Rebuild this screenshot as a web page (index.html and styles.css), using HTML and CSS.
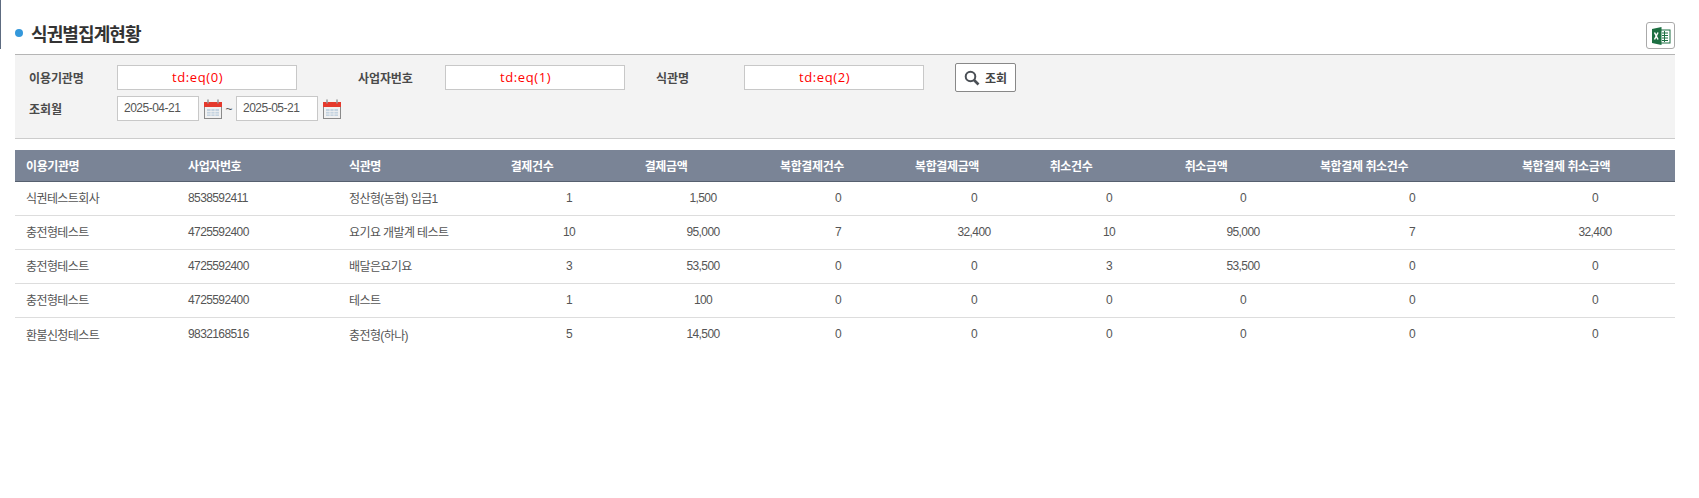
FILE: index.html
```html
<!DOCTYPE html>
<html lang="ko">
<head>
    <meta charset="UTF-8">
    <title>식권별집계현황</title>
    <link rel="stylesheet" href="styles.css">
</head>
<body>
<div class="page">
    <div class="edge"></div>
    <div class="content">
        <!-- 제목 -->
        <div class="title-bar">
            <h2 class="title"><span class="dot"></span>식권별집계현황</h2>
            <button type="button" class="btn-excel">
                <svg width="20" height="20" viewBox="0 0 20 20">
                    <rect x="8" y="4" width="11" height="13" fill="#fff" stroke="#1d6f42" stroke-width="1"/>
                    <path d="M11 7h6M11 9.500h6M11 12h6M11 14.500h6M13.500 5v11" stroke="#1d6f42" stroke-width="1" fill="none"/>
                    <path d="M1 3l9.500-2v18L1 17z" fill="#1d6f42"/>
                    <path d="M3.500 6.500l3.500 7M7 6.500l-3.500 7" stroke="#fff" stroke-width="1.500" fill="none"/>
                </svg>
            </button>
        </div>

        <!-- 검색 -->
        <div class="search">
            <div class="search-row">
                <label class="lbl lbl-a">이용기관명</label>
                <div class="field"><span class="eq">td:eq(0)</span></div>
                <label class="lbl lbl-b">사업자번호</label>
                <div class="field"><span class="eq">td:eq(1)</span></div>
                <label class="lbl lbl-c">식관명</label>
                <div class="field"><span class="eq">td:eq(2)</span></div>
                <button type="button" class="btn-search">
                    <svg width="16" height="16" viewBox="0 0 16 16">
                        <circle cx="6.500" cy="6.500" r="4.800" fill="none" stroke="#4a4f55" stroke-width="2"/>
                        <path d="M10 10l4.500 4.500" stroke="#4a4f55" stroke-width="2.600"/>
                    </svg>
                    조회
                </button>
            </div>
            <div class="search-row date-row">
                <label class="lbl lbl-a">조회월</label>
                <div class="date">2025-04-21</div>
                <svg class="cal" width="18" height="20" viewBox="0 0 18 20">
                    <rect x="0.500" y="3.500" width="17" height="16" fill="#f1f1f1" stroke="#8a8a8a"/>
                    <rect x="0" y="3" width="18" height="5" fill="#e5392c"/>
                    <path d="M4 0.500v4M14 0.500v4" stroke="#999" stroke-width="1.500"/>
                    <rect x="3" y="10" width="12" height="7" fill="#c4d3e0"/>
                    <path d="M3 12.500h12M3 15h12M7 10v7M11 10v7" stroke="#f1f1f1" stroke-width="0.800"/>
                </svg>
                <span class="tilde">~</span>
                <div class="date">2025-05-21</div>
                <svg class="cal" width="18" height="20" viewBox="0 0 18 20">
                    <rect x="0.500" y="3.500" width="17" height="16" fill="#f1f1f1" stroke="#8a8a8a"/>
                    <rect x="0" y="3" width="18" height="5" fill="#e5392c"/>
                    <path d="M4 0.500v4M14 0.500v4" stroke="#999" stroke-width="1.500"/>
                    <rect x="3" y="10" width="12" height="7" fill="#c4d3e0"/>
                    <path d="M3 12.500h12M3 15h12M7 10v7M11 10v7" stroke="#f1f1f1" stroke-width="0.800"/>
                </svg>
            </div>
        </div>

        <!-- 헤더 테이블 -->
        <table class="grid grid-head">
            <colgroup>
                <col class="h1"><col class="h2"><col class="h3"><col class="h4"><col class="h5"><col class="h6">
                <col class="h7"><col class="h8"><col class="h9"><col class="h10"><col class="h11">
            </colgroup>
            <tr>
                <th class="left">이용기관명</th>
                <th class="left">사업자번호</th>
                <th class="left">식관명</th>
                <th>결제건수</th>
                <th>결제금액</th>
                <th>복합결제건수</th>
                <th>복합결제금액</th>
                <th>취소건수</th>
                <th>취소금액</th>
                <th>복합결제 취소건수</th>
                <th class="last">복합결제 취소금액</th>
            </tr>
        </table>

        <!-- 데이터 테이블 -->
        <table class="grid grid-body">
            <colgroup>
                <col class="b1"><col class="b2"><col class="b3"><col class="b4"><col class="b5"><col class="b6">
                <col class="b7"><col class="b8"><col class="b9"><col class="b10"><col class="b11">
            </colgroup>
            <tr>
                <td class="left">식권테스트회사</td><td class="left">8538592411</td><td class="left">정산형(농협) 입금1</td>
                <td>1</td><td>1,500</td><td>0</td><td>0</td><td>0</td><td>0</td><td>0</td><td>0</td>
            </tr>
            <tr>
                <td class="left">충전형테스트</td><td class="left">4725592400</td><td class="left">요기요 개발계 테스트</td>
                <td>10</td><td>95,000</td><td>7</td><td>32,400</td><td>10</td><td>95,000</td><td>7</td><td>32,400</td>
            </tr>
            <tr>
                <td class="left">충전형테스트</td><td class="left">4725592400</td><td class="left">배달은요기요</td>
                <td>3</td><td>53,500</td><td>0</td><td>0</td><td>3</td><td>53,500</td><td>0</td><td>0</td>
            </tr>
            <tr>
                <td class="left">충전형테스트</td><td class="left">4725592400</td><td class="left">테스트</td>
                <td>1</td><td>100</td><td>0</td><td>0</td><td>0</td><td>0</td><td>0</td><td>0</td>
            </tr>
            <tr>
                <td class="left">환불신청테스트</td><td class="left">9832168516</td><td class="left">충전형(하나)</td>
                <td>5</td><td>14,500</td><td>0</td><td>0</td><td>0</td><td>0</td><td>0</td><td>0</td>
            </tr>
        </table>
    </div>
</div>
</body>
</html>
```

FILE: styles.css
```css
* {
    box-sizing: border-box;
}

body {
    margin: 0;
    background-color: #fff;
    color: #555;
    font-family: "Liberation Sans", "Noto Sans CJK KR", sans-serif;
    font-size: 12px;
}

.page {
    display: flex;
    align-items: flex-start;
}

.edge {
    width: 1px;
    height: 49px;
    background-color: #5d6b80;
}

.content {
    width: 1660px;
    margin-left: 14px;
}

/* title */
.title-bar {
    display: flex;
    justify-content: space-between;
    align-items: flex-end;
    height: 54px;
    padding-bottom: 5px;
}

.title {
    display: flex;
    align-items: center;
    margin: 0 0 3px;
    color: #333;
    font-size: 18px;
    font-weight: bold;
    letter-spacing: -0.9px;
}

.dot {
    width: 8px;
    height: 8px;
    margin-right: 8px;
    border-radius: 50%;
    background-color: #3498db;
}

.btn-excel {
    display: flex;
    align-items: center;
    justify-content: center;
    width: 29px;
    height: 27px;
    padding: 0;
    border: 1px solid #aaa;
    border-radius: 3px;
    background-color: #fff;
}

/* search */
.search {
    height: 85px;
    padding-top: 8px;
    border-top: 1px solid #b5b5b5;
    border-bottom: 1px solid #ccc;
    background-color: #f3f3f3;
}

.search-row {
    display: flex;
    align-items: center;
    height: 29px;
}

.date-row {
    margin-top: 2px;
}

.lbl {
    color: #4a4a4a;
    font-weight: bold;
    letter-spacing: -0.1px;
}

.lbl-a {
    width: 102px;
    padding-left: 14px;
}

.lbl-b {
    width: 148px;
    padding-left: 61px;
}

.lbl-c {
    width: 119px;
    padding-left: 31px;
}

.field {
    width: 180px;
    height: 25px;
    padding-left: 54px;
    border: 1px solid #c8c8c8;
    background-color: #fff;
    line-height: 22px;
}

.eq {
    color: #f00;
    font-family: "Open Sans", sans-serif;
    font-size: 13px;
    font-weight: 400;
    letter-spacing: 0.6px;
}

.btn-search {
    display: flex;
    align-items: center;
    gap: 5px;
    width: 61px;
    height: 29px;
    margin-left: 31px;
    padding: 0 0 0 8px;
    border: 1px solid #888;
    border-radius: 2px;
    background-color: #fff;
    color: #444;
    font-family: inherit;
    font-size: 12px;
    font-weight: bold;
}

.date {
    width: 82px;
    height: 25px;
    padding-left: 6px;
    border: 1px solid #c8c8c8;
    background-color: #fff;
    line-height: 23px;
    letter-spacing: -0.5px;
}

.cal {
    margin-left: 5px;
}

.tilde {
    width: 14px;
    text-align: center;
}

/* grid */
.grid {
    width: 100%;
    table-layout: fixed;
    border-collapse: separate;
    border-spacing: 0;
}

.grid-head {
    margin-top: 11px;
}

.grid th {
    height: 32px;
    padding: 0 0 1px;
    border-bottom: 1px solid #56606f;
    background-color: #7a8496;
    color: #fff;
    font-size: 12px;
    font-weight: bold;
    letter-spacing: -0.4px;
    text-align: center;
}

.grid th.last {
    padding-right: 12px;
}

.grid td {
    height: 34px;
    padding: 0 0 2px;
    border-bottom: 1px solid #ddd;
    letter-spacing: -0.6px;
    text-align: center;
}

.grid tr:last-child td {
    border-bottom: none;
}

.grid .left {
    padding-left: 11px;
    text-align: left;
}

.h1 { width: 162px; }
.h2 { width: 161px; }
.h3 { width: 113px; }
.h4 { width: 162px; }
.h5 { width: 106px; }
.h6 { width: 186px; }
.h7 { width: 84px; }
.h8 { width: 164px; }
.h9 { width: 106px; }
.h10 { width: 210px; }
.h11 { width: 206px; }

.b1 { width: 162px; }
.b2 { width: 161px; }
.b3 { width: 163px; }
.b4 { width: 136px; }
.b5 { width: 132px; }
.b6 { width: 138px; }
.b7 { width: 134px; }
.b8 { width: 136px; }
.b9 { width: 132px; }
.b10 { width: 206px; }
.b11 { width: 160px; }
```
